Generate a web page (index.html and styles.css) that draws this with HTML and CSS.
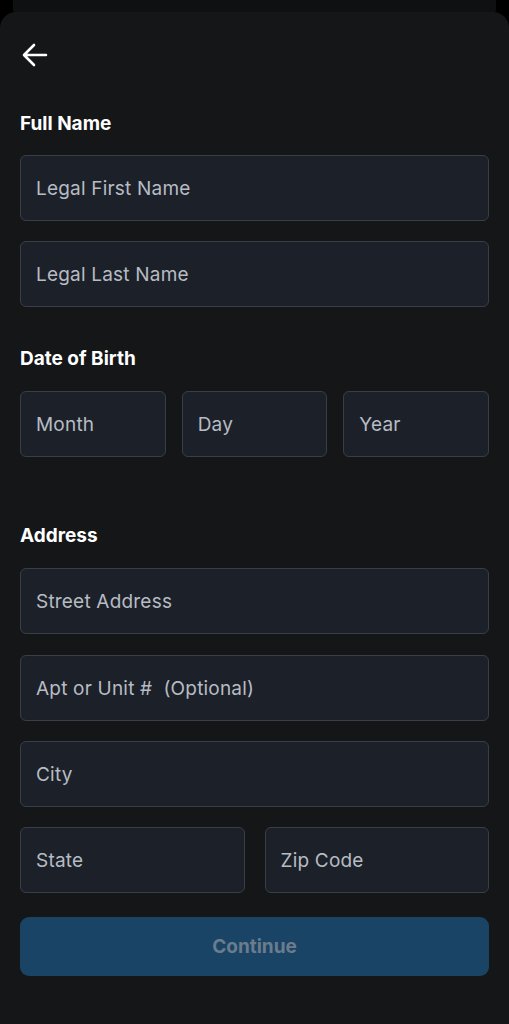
FILE: index.html
```html
<!DOCTYPE html>
<html>
<head>
<meta charset="utf-8">
<link rel="stylesheet" href="styles.css">
</head>
<body>
<div class="backcard"></div>
<main class="sheet">
  <button class="back" aria-label="Back">
    <svg width="28" height="26" viewBox="0 0 28 26"><path d="M25 13H3.5M13 3L3 13l10 10" fill="none" stroke="#fff" stroke-width="2.6" stroke-linecap="round" stroke-linejoin="round"/></svg>
  </button>
  <h2 class="label first">Full Name</h2>
  <div class="stack">
    <div class="field">Legal First Name</div>
    <div class="field">Legal Last Name</div>
  </div>
  <h2 class="label dob">Date of Birth</h2>
  <div class="row3">
    <div class="field">Month</div>
    <div class="field">Day</div>
    <div class="field">Year</div>
  </div>
  <h2 class="label addr">Address</h2>
  <div class="stack">
    <div class="field">Street Address</div>
    <div class="field apt">Apt or Unit #&nbsp; (Optional)</div>
    <div class="field">City</div>
    <div class="row2">
      <div class="field">State</div>
      <div class="field">Zip Code</div>
    </div>
  </div>
  <button class="continue">Continue</button>
</main>
</body>
</html>
```
FILE: styles.css
```css
* { box-sizing: border-box; }
html, body { margin: 0; padding: 0; background: #000; }
body {
  width: 509px;
  height: 1024px;
  overflow: hidden;
  font-family: Inter, "Liberation Sans", sans-serif;
}
.backcard {
  height: 22px;
  margin: 0 13px -10px;
  background: #0f1012;
  border-radius: 0 0 14px 14px;
}
.sheet {
  position: relative;
  background: #151618;
  border-radius: 16px 16px 0 0;
  height: 1012px;
  padding: 30px 20px 0 20px;
}
.back {
  display: block;
  background: none;
  border: 0;
  padding: 0;
  margin: 0 0 0 1px;
  width: 28px;
  height: 26px;
}
.back svg { display: block; }
.label {
  margin: 0;
  color: #fff;
  font-size: 19px;
  font-weight: 700;
  line-height: 22px;
  letter-spacing: 0;
}
.first { margin-top: 45px; margin-bottom: 20px; }
.dob { margin-top: 41px; margin-bottom: 21px; }
.addr { margin-top: 68px; margin-bottom: 21px; }
.stack { display: flex; flex-direction: column; gap: 20px; }
.apt { margin-top: 1px; }
.field {
  height: 66px;
  background: #1c2129;
  border: 1px solid #3a3f47;
  border-radius: 6px;
  display: flex;
  align-items: center;
  padding: 0 15px;
  color: #b7bcc4;
  font-size: 19px;
  letter-spacing: 0.2px;
  white-space: nowrap;
}
.row3 { display: grid; grid-template-columns: 1fr 1fr 1fr; gap: 16px; }
.row2 { display: grid; grid-template-columns: 1fr 1fr; gap: 20px; }
.continue {
  display: block;
  width: 100%;
  height: 59px;
  margin-top: 24px;
  background: #1a4466;
  border: 0;
  border-radius: 9px;
  color: #6b7c8c;
  font-family: inherit;
  font-size: 19px;
  font-weight: 700;
}
```
